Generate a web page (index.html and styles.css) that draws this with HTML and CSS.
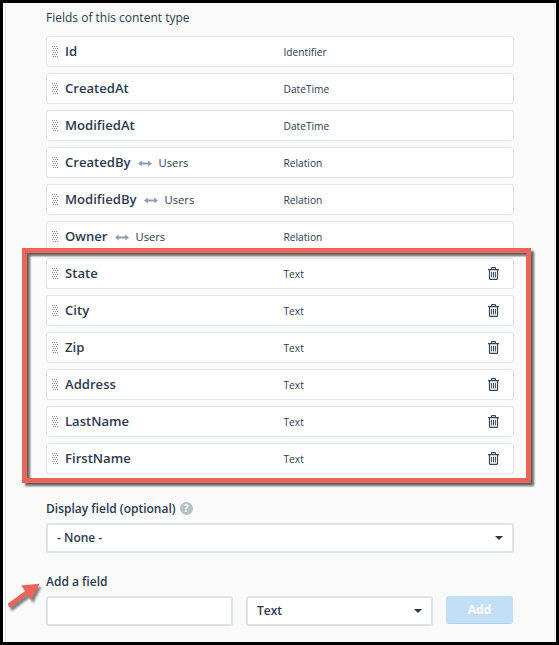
FILE: index.html
```html
<!DOCTYPE html>
<html lang="en">
<head>
    <meta charset="UTF-8">
    <meta name="viewport" content="width=device-width, initial-scale=1.0">
    <title>Content type fields</title>
    <link rel="stylesheet" href="styles.css">
</head>
<body>
<svg class="sprite">
    <symbol id="grip" viewBox="0 0 6 12">
        <path d="M0 .5h1M2 .5h1M4 .5h1M1 2.5h1M3 2.5h1M5 2.5h1M0 4.5h1M2 4.5h1M4 4.5h1M1 6.5h1M3 6.5h1M5 6.5h1M0 8.5h1M2 8.5h1M4 8.5h1M1 10.5h1M3 10.5h1M5 10.5h1" stroke="#8a8a8a" stroke-width="1"/>
    </symbol>
    <symbol id="relation" viewBox="0 0 14 7">
        <path d="M0 3.5L3.8.5v2.1h6.4V.5L14 3.5l-3.8 3V4.4H3.8v2.1z" fill="#939eab"/>
    </symbol>
    <symbol id="trash" viewBox="0 0 11 13">
        <path d="M0 2.7h11M3.5 2.5V1.2q0-.6.6-.6h2.8q.6 0 .6.6v1.3M1.5 3v8.4q0 1 1 1h6q1 0 1-1V3" fill="none" stroke="#34475a" stroke-width="1.2"/>
        <path d="M3.6 4.8v5.6M5.5 4.8v5.6M7.4 4.8v5.6" stroke="#34475a" stroke-width="1"/>
    </symbol>
</svg>

<div class="panel">
    <h2 class="title">Fields of this content type</h2>
    <ul class="fields">
        <li class="field">
            <svg class="grip"><use href="#grip"/></svg>
            <div class="name">Id</div>
            <span class="type">Identifier</span>
        </li>
        <li class="field">
            <svg class="grip"><use href="#grip"/></svg>
            <div class="name">CreatedAt</div>
            <span class="type">DateTime</span>
        </li>
        <li class="field">
            <svg class="grip"><use href="#grip"/></svg>
            <div class="name">ModifiedAt</div>
            <span class="type">DateTime</span>
        </li>
        <li class="field">
            <svg class="grip"><use href="#grip"/></svg>
            <div class="name">CreatedBy <svg class="relation"><use href="#relation"/></svg><span class="target">Users</span></div>
            <span class="type">Relation</span>
        </li>
        <li class="field">
            <svg class="grip"><use href="#grip"/></svg>
            <div class="name">ModifiedBy <svg class="relation"><use href="#relation"/></svg><span class="target">Users</span></div>
            <span class="type">Relation</span>
        </li>
        <li class="field">
            <svg class="grip"><use href="#grip"/></svg>
            <div class="name">Owner <svg class="relation"><use href="#relation"/></svg><span class="target">Users</span></div>
            <span class="type">Relation</span>
        </li>
        <li class="field">
            <svg class="grip"><use href="#grip"/></svg>
            <div class="name">State</div>
            <span class="type">Text</span>
            <svg class="trash"><use href="#trash"/></svg>
        </li>
        <li class="field">
            <svg class="grip"><use href="#grip"/></svg>
            <div class="name">City</div>
            <span class="type">Text</span>
            <svg class="trash"><use href="#trash"/></svg>
        </li>
        <li class="field">
            <svg class="grip"><use href="#grip"/></svg>
            <div class="name">Zip</div>
            <span class="type">Text</span>
            <svg class="trash"><use href="#trash"/></svg>
        </li>
        <li class="field">
            <svg class="grip"><use href="#grip"/></svg>
            <div class="name">Address</div>
            <span class="type">Text</span>
            <svg class="trash"><use href="#trash"/></svg>
        </li>
        <li class="field">
            <svg class="grip"><use href="#grip"/></svg>
            <div class="name">LastName</div>
            <span class="type">Text</span>
            <svg class="trash"><use href="#trash"/></svg>
        </li>
        <li class="field">
            <svg class="grip"><use href="#grip"/></svg>
            <div class="name">FirstName</div>
            <span class="type">Text</span>
            <svg class="trash"><use href="#trash"/></svg>
        </li>
    </ul>

    <div class="label display-label">Display field (optional) <span class="help">?</span></div>
    <div class="select">- None -<span class="caret"></span></div>

    <div class="label add-label">Add a field</div>
    <div class="add-row">
        <input class="input" type="text">
        <div class="select">Text<span class="caret"></span></div>
        <button class="add">Add</button>
    </div>
</div>

<!-- annotations -->
<div class="highlight"></div>
<svg class="arrow" viewBox="0 0 32 26">
    <path d="M0 20.5L17.5 7.8 13 2.5 31.5.8 23 17.2 19.8 11.6 2.8 24.6Q.2 25 0 20.5z" fill="#ec6558"/>
</svg>
</body>
</html>
```

FILE: styles.css
```css
* {
    box-sizing: border-box;
}

body {
    margin: 0;
    height: 645px;
    border: 3px solid #000;
    padding: 0 1px 0 2px;
    background-color: #fff;
    font-family: "Open Sans", sans-serif;
    color: #2b3b4e;
    overflow: hidden;
}

.sprite {
    display: none;
}

.panel {
    height: 639px;
    padding: 5px 40px 0;
    border: solid #e0e5e9;
    border-width: 0 1px;
    background-color: #fafafa;
}

.title {
    margin: 0 0 8px;
    font-size: 12px;
    font-weight: 400;
    line-height: 20px;
}

.fields {
    display: flex;
    flex-direction: column;
    gap: 6px;
    margin: 0;
    padding: 0;
    list-style: none;
}

.field {
    display: flex;
    align-items: center;
    height: 31px;
    padding: 0 14px 0 5px;
    border: 1px solid #dfe5e9;
    border-radius: 3px;
    background-color: #fff;
}

.grip {
    width: 6px;
    height: 12px;
    margin-right: 7px;
}

.name {
    display: flex;
    align-items: center;
    width: 218.5px;
    padding-bottom: 1px;
    font-size: 13.1px;
    font-weight: 600;
    line-height: 28px;
}

.relation {
    width: 14px;
    height: 7px;
    margin: 2px 7px 0;
}

.target {
    padding-top: 1px;
    font-size: 11.2px;
    font-weight: 400;
}

.type {
    padding-top: 1px;
    font-size: 10.2px;
}

.trash {
    width: 11px;
    height: 13px;
    margin-left: auto;
}

.label {
    display: flex;
    align-items: center;
    font-size: 12px;
    font-weight: 600;
    line-height: 18px;
}

.display-label {
    margin: 26px 0 5px;
}

.add-label {
    margin: 20px 0 5px;
}

.help {
    width: 13px;
    height: 13px;
    margin: -2px 0 0 4px;
    border-radius: 50%;
    background-color: #b4c2c4;
    color: #fff;
    font-size: 10px;
    font-weight: 700;
    line-height: 13px;
    text-align: center;
}

.select,
.input {
    height: 30px;
    border: 2px solid #dfe4e8;
    border-radius: 3px;
    background-color: #fff;
}

.select {
    display: flex;
    align-items: center;
    justify-content: space-between;
    padding: 0 9px 1px;
    font-size: 12px;
    font-weight: 600;
}

.caret {
    border: 4px solid transparent;
    border-top: 4px solid #26384b;
    border-bottom: 0;
}

.add-row {
    display: grid;
    grid-template-columns: 187px 187px 67px;
    gap: 13px;
}

.add {
    height: 28px;
    padding: 0;
    border: 0;
    border-bottom: 1px solid #add3ef;
    border-radius: 3px;
    background-color: #c2dff5;
    color: #fff;
    font-family: inherit;
    font-size: 12px;
    font-weight: 700;
}

.highlight {
    position: absolute;
    left: 22px;
    top: 248px;
    width: 509px;
    height: 235px;
    border: 5px solid #ec6558;
    filter: drop-shadow(3px 3px 1px rgba(0, 0, 0, 0.6));
}

.arrow {
    position: absolute;
    left: 8px;
    top: 583px;
    width: 32px;
    height: 26px;
    overflow: visible;
    filter: drop-shadow(2px 3px 1px rgba(0, 0, 0, 0.5));
}
```
